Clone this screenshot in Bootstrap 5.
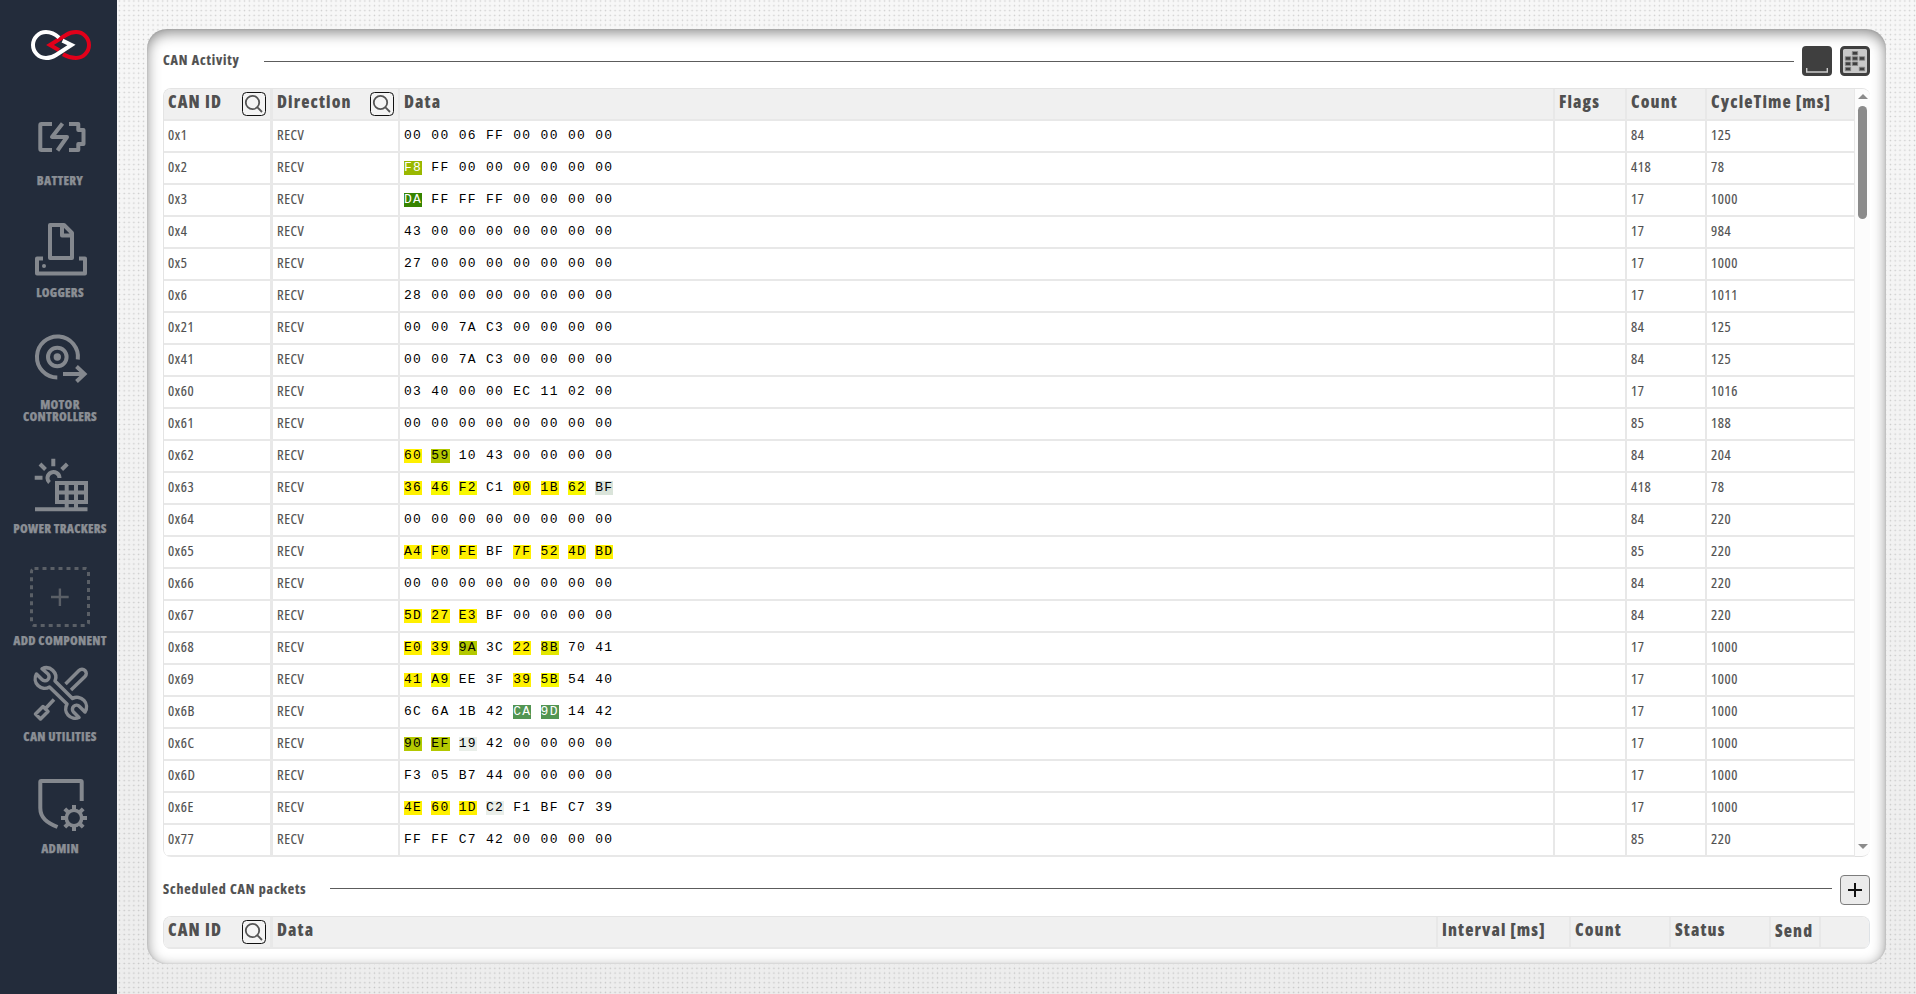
<!DOCTYPE html>
<html lang="en">
<head>
<meta charset="utf-8">
<title>CAN Activity</title>
<link href="https://cdn.jsdelivr.net/npm/bootstrap@5.3.0/dist/css/bootstrap.min.css" rel="stylesheet">
<style>
  body{font-family:"Open Sans",sans-serif;font-stretch:75%;color:#505050;height:994px;overflow:hidden;
    background:radial-gradient(circle at 50% 50%,rgba(0,0,0,.17) .4px,transparent 1.15px) 117px 3.4px/4.82px 4.82px,linear-gradient(#f7f7f7,#ededed)}
  .sidebar{width:117px;padding-left:3px;background:#232c3b;color:#8a8e94}
  .sidebar svg{display:block;overflow:visible;fill:none;stroke:#84888e;stroke-width:4;stroke-linejoin:round}
  .side-label{font-size:12.5px;font-weight:800;line-height:12px;text-align:center;letter-spacing:.25px;text-transform:uppercase;white-space:nowrap;-webkit-text-stroke:.25px #8a8e94}
  .main-area{padding:29px 30px 30px}
  .panel{height:935px;border-radius:20px;background:#fff;padding:16px 16px 0;
    box-shadow:inset 0 4px 14px rgba(0,0,0,.45),inset 0 0 2px rgba(0,0,0,.15)}
  .bar{height:32px}
  .bar h2{font-size:14px;font-weight:700;letter-spacing:.85px;line-height:20px;margin:0 24px 2px 0;white-space:nowrap;-webkit-text-stroke:.2px #505050}
  .rule{height:1px;background:#5c5c5c;margin-right:8px}
  .grid-frame{border:1px solid #e4e4e4;border-right:0;border-bottom:0;border-radius:8px;overflow:hidden}
  .can-table{--bs-table-bg:transparent;table-layout:fixed;border-collapse:separate;border-spacing:0;color:#505050}
  .can-table th,.can-table td{height:32px;padding:0 4px;border:0 solid #e8e8e8;border-width:0 2px 2px 0;vertical-align:middle;box-shadow:none;background:#fff;line-height:20px;white-space:nowrap}
  .can-table th{background:#f0f0f0;font-size:17px;font-weight:800;letter-spacing:1.1px}
  .can-table th span{position:relative;top:-2px}
  .can-table td{font-size:14.5px;letter-spacing:.6px;font-stretch:79%;padding-bottom:2px;-webkit-text-stroke:.15px #505050}
  .can-table tr>:first-child{border-right-width:3px}
  .can-table tr>:last-child{border-right-width:1px}
  .can-table td.hex{font-family:"Liberation Mono",monospace;font-size:13px;letter-spacing:1.3px;color:#000;padding:0 4px;line-height:14px;-webkit-text-stroke:0}
  .hex i{font-style:normal;display:inline-block;height:14px}
  .find{width:24px;height:24px;border:1px solid #111;border-radius:4.5px;background:#f4f4f4;padding:0;display:block}
  .find svg{display:block;fill:none;stroke:#555;stroke-width:1.8}
  .scroller{width:15px;background:#fcfcfc;border-bottom:1px solid #e0e0e0;border-radius:0 8px 8px 0}
  .thumb{width:9px;height:113px;border-radius:5px;background:#8b8b8b;margin-top:7px}
  .tri{width:0;height:0;border:5px solid transparent;border-top-width:0;border-bottom-color:#8b8b8b}
  .tri.down{border-bottom-width:0;border-top:5px solid #8b8b8b}
  .plus{width:30px;height:30px;border:1px solid #7c7c7c;border-radius:4px;background:#ebebeb;padding:0}
</style>
</head>
<body class="d-flex">
<nav class="sidebar flex-shrink-0 h-100 d-flex flex-column align-items-center">
  <svg width="64" height="75" viewBox="28 0 64 75" style="stroke-linejoin:miter">
    <path stroke="#e2001a" d="M63 54.2C68 57.2 72 58 76 58A13 13 0 0 0 76 32C72 32 69 33 66 35L50 45L59 50.3"/>
    <path stroke="#fff" d="M59 37.6C54 33 50 32 46 32A13 13 0 0 0 46 58C50 58 53 57 56 55L71.5 45L62.5 40.6"/>
  </svg>
  <div>
    <svg class="mx-auto" width="64" height="100" viewBox="28 75 64 100"><path d="M52 124H41.500Q40.300 124 40.300 125.200V148.800Q40.300 150 41.500 150H52M69 124H78.300V130H83.500V144H78.300V150H69M62.500 123.500L52 137H67L57.500 150.500"/></svg>
    <div class="side-label">Battery</div>
  </div>
  <div>
    <svg class="mx-auto" width="64" height="100" viewBox="28 187 64 100"><path d="M50 225H64L72 233V258H50ZM62 225V235.500H72M43 258.500H37V273.500H85V258.500H79"/><circle cx="44" cy="266" r="2" fill="#84888e" stroke="none"/></svg>
    <div class="side-label">Loggers</div>
  </div>
  <div>
    <svg class="mx-auto" width="64" height="100" viewBox="28 299 64 100"><path d="M77.800 359.500A20.500 20.500 0 1 0 57.300 377.500M63 374H84M76.500 366.500L84.500 374L76.500 381.500" stroke-linejoin="miter"/><circle cx="57.300" cy="357" r="9.300"/><circle cx="57.300" cy="357" r="3.700" fill="#84888e" stroke="none"/></svg>
    <div class="side-label">Motor<br>Controllers</div>
  </div>
  <div>
    <svg class="mx-auto" width="64" height="100" viewBox="28 423 64 100"><path d="M35 509.300H87.500M57 483H86V502H57ZM57 492.500H86M66.700 483V508M76 483V508M49.500 482.500A6 6 0 1 1 59.500 478M53.300 458.700V466.300M34.700 477.700H42.500M40 464L45.500 469.500M67.300 464L61.700 469.500" stroke-linejoin="miter"/></svg>
    <div class="side-label">Power Trackers</div>
  </div>
  <div>
    <svg class="mx-auto" width="64" height="100" viewBox="28 535 64 100"><rect x="31.500" y="568.500" width="57" height="57" rx="3" stroke="#5a5f66" stroke-width="3" stroke-dasharray="4 4"/><path stroke="#5a5f66" stroke-width="2.400" d="M51 597H68.700M59.900 588.500V606"/></svg>
    <div class="side-label">Add Component</div>
  </div>
  <div>
    <svg class="mx-auto" width="64" height="84" viewBox="28 647 64 84" style="stroke-width:3.5"><path d="M42 668.800A9.500 9.500 0 0 1 55 681L72.500 698.500A9.500 9.500 0 0 1 85 712L79.500 706.500A4 4 0 0 0 73.500 712L79 717.500A9.500 9.500 0 0 1 67 704L49.500 687A9.500 9.500 0 0 1 36.500 674L42 679.500A4 4 0 0 0 48 674ZM65.500 684L79 670.500A4.200 4.200 0 0 1 85 676.500L71 690M54 699.500L46 708M35.500 714L43 706.500L48 711.500L40.500 719Z"/></svg>
    <div class="side-label">CAN Utilities</div>
  </div>
  <div>
    <svg class="mx-auto" width="64" height="100" viewBox="28 743 64 100"><path d="M81.700 801V782Q81.700 781 80.700 781H41.300Q40.300 781 40.300 782V808C40.300 818 47 822.500 57.500 827"/><circle cx="74" cy="818" r="7.700" stroke-width="3.600"/><path d="M74 805V809.500M74 826.500V831M61 818H65.500M82.500 818H87M64.800 808.800L68 812M80 824L83.200 827.200M64.800 827.200L68 824M80 812L83.200 808.800"/></svg>
    <div class="side-label">Admin</div>
  </div>
</nav>

<main class="main-area flex-grow-1">
  <section class="panel">
    <div class="bar d-flex align-items-center">
      <h2>CAN Activity</h2>
      <div class="rule flex-grow-1"></div>
      <svg class="me-2" width="30" height="30"><rect width="30" height="30" rx="4" fill="#3f3f3f"/><path d="M4.700 22V26H25.300V22" fill="none" stroke="#ccc" stroke-width="1.400"/></svg>
      <svg width="30" height="30"><rect x="1.500" y="1.500" width="27" height="27" rx="3" fill="#c9c9c9" stroke="#3f3f3f" stroke-width="3"/><g fill="#3f3f3f" stroke="#8a8a8a" stroke-width=".8"><path d="M12.300 5.500h5.400v3.500h-5.400zM5.300 10.700h5.400v3.500h-5.400zM12.300 10.700h5.400v3.500h-5.400zM19.300 10.700h5.400v3.500h-5.400zM5.300 16h5.400v3.500h-5.400zM12.300 16h5.400v3.500h-5.400zM5.300 21.200h5.400v3.500h-5.400zM19.300 21.200h5.400v3.500h-5.400z"/></g></svg>
    </div>

    <div class="grid-frame d-flex" style="margin-top:11px">
      <table class="table can-table mb-0 flex-grow-1 w-auto">
        <colgroup><col style="width:109px"><col style="width:127px"><col><col style="width:72px"><col style="width:80px"><col style="width:148px"></colgroup>
        <thead><tr>
          <th><div class="d-flex justify-content-between align-items-center"><span>CAN ID</span><button class="find"><svg width="22" height="22"><circle cx="9.500" cy="9.500" r="6.700"/><path d="M14.200 14.200L19 19"/></svg></button></div></th>
          <th><div class="d-flex justify-content-between align-items-center"><span>Direction</span><button class="find"><svg width="22" height="22"><circle cx="9.500" cy="9.500" r="6.700"/><path d="M14.200 14.200L19 19"/></svg></button></div></th>
          <th><span>Data</span></th><th><span>Flags</span></th><th><span>Count</span></th><th><span>CycleTime [ms]</span></th>
        </tr></thead>
        <tbody id="packets"></tbody>
      </table>
      <div class="scroller d-flex flex-column align-items-center">
        <div class="tri" style="margin-top:5px"></div><div class="thumb"></div><div class="tri down mt-auto" style="margin-bottom:7px"></div>
      </div>
    </div>

    <div class="bar d-flex align-items-center" style="margin-top:17px">
      <h2>Scheduled CAN packets</h2>
      <div class="rule flex-grow-1 mb-1"></div>
      <button class="plus"><svg class="d-block" width="28" height="28"><path d="M7 14H21M14 7V21" stroke="#111" stroke-width="2"/></svg></button>
    </div>

    <div class="grid-frame border-end" style="margin-top:10px">
      <table class="table can-table mb-0">
        <colgroup><col style="width:109px"><col><col style="width:133px"><col style="width:100px"><col style="width:100px"><col style="width:50px"><col style="width:48px"></colgroup>
        <thead><tr>
          <th><div class="d-flex justify-content-between align-items-center"><span>CAN ID</span><button class="find"><svg width="22" height="22"><circle cx="9.500" cy="9.500" r="6.700"/><path d="M14.200 14.200L19 19"/></svg></button></div></th>
          <th><span>Data</span></th><th><span>Interval [ms]</span></th><th><span>Count</span></th><th><span>Status</span></th><th><span style="top:-1px">Send</span></th><th class="border-end-0"></th>
        </tr></thead>
      </table>
    </div>
  </section>
</main>

<script src="https://cdn.jsdelivr.net/npm/bootstrap@5.3.0/dist/js/bootstrap.bundle.min.js"></script>
<script>
  // highlight key after a byte: how recently that byte changed
  const tone = {y:'#fff000', l:'#f8f800', m:'#e2e600', o:'#b3c800', v:'#9ab800', g:'#368400', t:'#529552', p:'#dae4da', q:'#e9eee9'};
  const rows = [
    ['0x1','00 00 06 FF 00 00 00 00',84,125],
    ['0x2','F8v FF 00 00 00 00 00 00',418,78],
    ['0x3','DAg FF FF FF 00 00 00 00',17,1000],
    ['0x4','43 00 00 00 00 00 00 00',17,984],
    ['0x5','27 00 00 00 00 00 00 00',17,1000],
    ['0x6','28 00 00 00 00 00 00 00',17,1011],
    ['0x21','00 00 7A C3 00 00 00 00',84,125],
    ['0x41','00 00 7A C3 00 00 00 00',84,125],
    ['0x60','03 40 00 00 EC 11 02 00',17,1016],
    ['0x61','00 00 00 00 00 00 00 00',85,188],
    ['0x62','60y 59o 10 43 00 00 00 00',84,204],
    ['0x63','36y 46l F2l C1 00y 1By 62l BFp',418,78],
    ['0x64','00 00 00 00 00 00 00 00',84,220],
    ['0x65','A4y F0y FEy BF 7Fy 52y 4Dy BDy',85,220],
    ['0x66','00 00 00 00 00 00 00 00',84,220],
    ['0x67','5Dy 27y E3y BF 00 00 00 00',84,220],
    ['0x68','E0y 39y 9Ao 3C 22y 8Bm 70 41',17,1000],
    ['0x69','41y A9l EE 3F 39y 5Bl 54 40',17,1000],
    ['0x6B','6C 6A 1B 42 CAt 9Dt 14 42',17,1000],
    ['0x6C','90o EFo 19q 42 00 00 00 00',17,1000],
    ['0x6D','F3 05 B7 44 00 00 00 00',17,1000],
    ['0x6E','4Ey 60y 1Dy C2q F1 BF C7 39',17,1000],
    ['0x77','FF FF C7 42 00 00 00 00',85,220]
  ];
  document.getElementById('packets').innerHTML = rows.map(([id, data, count, cycle]) => {
    const bytes = data.split(' ').map(b => {
      const k = b[2];
      return k ? `<i style="background:${tone[k]}${'vgt'.includes(k) ? ';color:#fff' : ''}">${b.slice(0, 2)}</i>` : `<i>${b}</i>`;
    }).join(' ');
    return `<tr><td>${id}</td><td>RECV</td><td class="hex">${bytes}</td><td></td><td>${count}</td><td>${cycle}</td></tr>`;
  }).join('');
</script>
</body>
</html>
